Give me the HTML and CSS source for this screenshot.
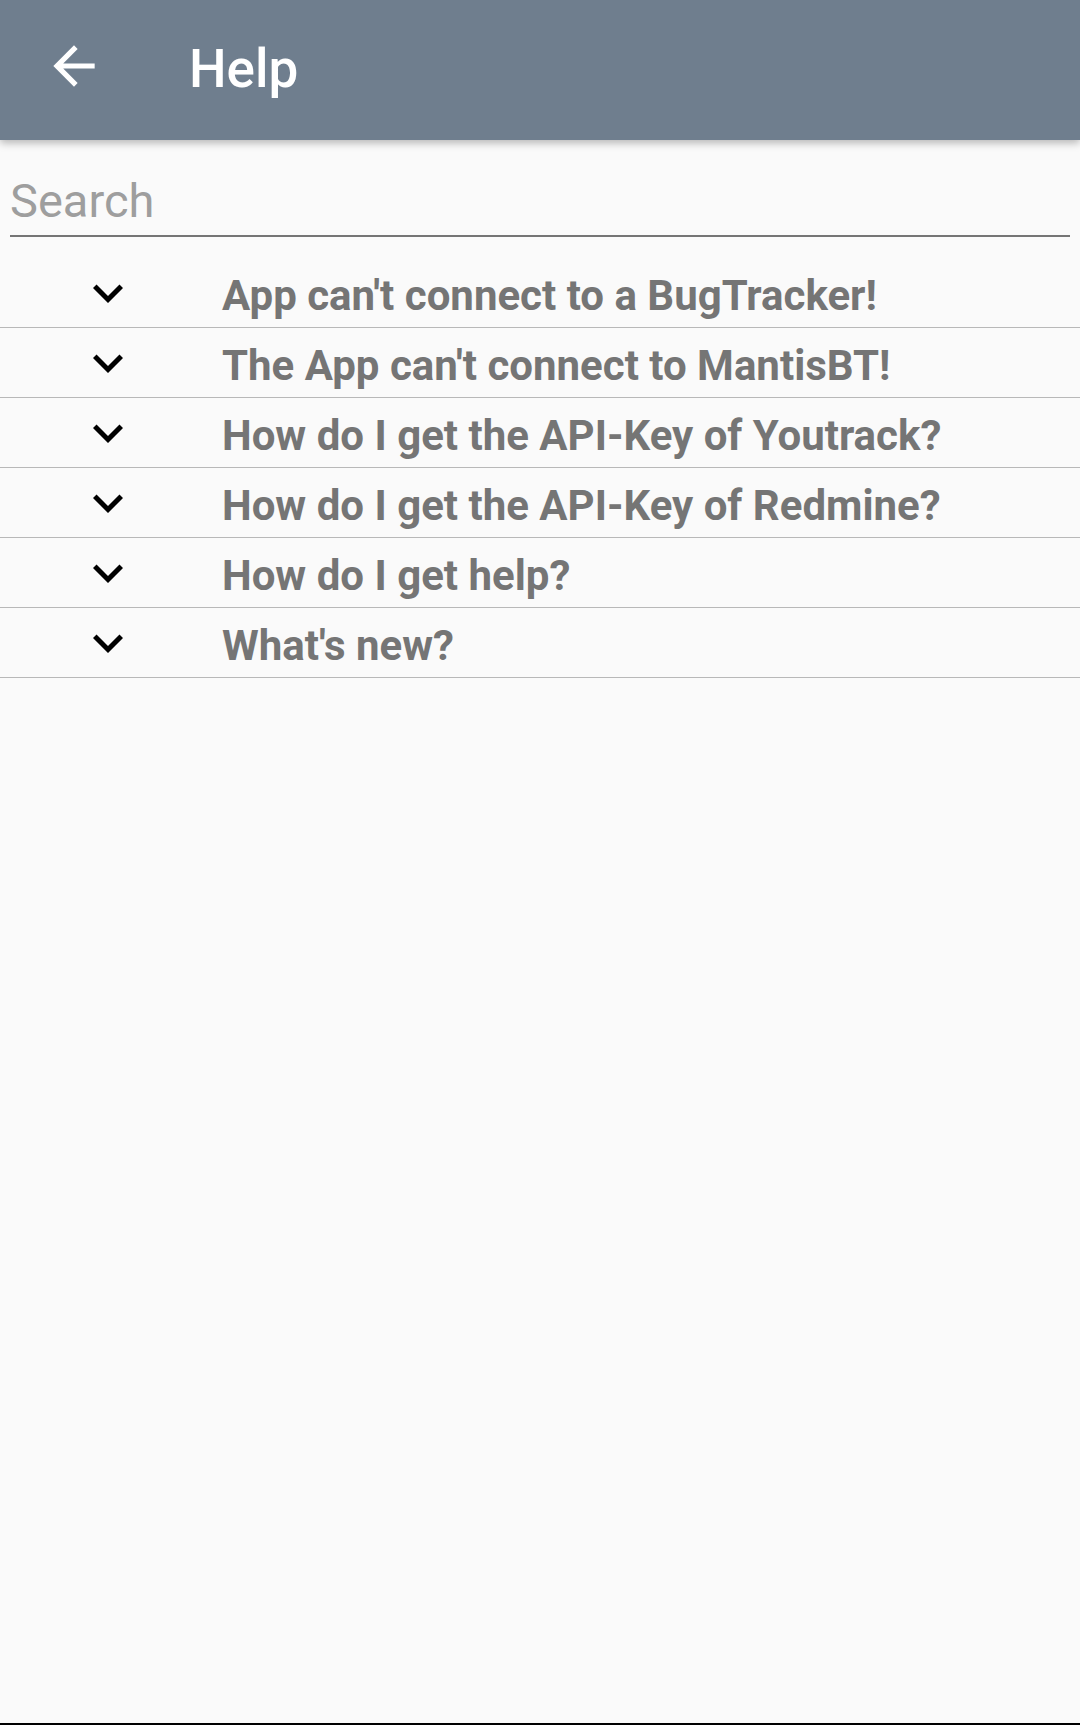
FILE: index.html
```html
<!DOCTYPE html>
<html>
<head>
<meta charset="utf-8">
<link rel="stylesheet" href="styles.css">
</head>
<body>
<div class="screen">
  <header class="appbar">
    <svg class="back" viewBox="0 0 24 24" width="62" height="62"><path fill="#fff" d="M20 11H7.83l5.59-5.59L12 4l-8 8 8 8 1.41-1.41L7.83 13H20v-2z"/></svg>
    <div class="title">Help</div>
  </header>
  <div class="search"><span class="placeholder">Search</span></div>
  <div class="list">
    <div class="row"><svg class="chev" viewBox="0 0 24 24" width="60" height="60"><path fill="#000" d="M16.59 8.59L12 13.17 7.41 8.59 6 10l6 6 6-6z"/></svg><span class="q">App can't connect to a BugTracker!</span></div>
    <div class="row"><svg class="chev" viewBox="0 0 24 24" width="60" height="60"><path fill="#000" d="M16.59 8.59L12 13.17 7.41 8.59 6 10l6 6 6-6z"/></svg><span class="q">The App can't connect to MantisBT!</span></div>
    <div class="row"><svg class="chev" viewBox="0 0 24 24" width="60" height="60"><path fill="#000" d="M16.59 8.59L12 13.17 7.41 8.59 6 10l6 6 6-6z"/></svg><span class="q">How do I get the API-Key of Youtrack?</span></div>
    <div class="row"><svg class="chev" viewBox="0 0 24 24" width="60" height="60"><path fill="#000" d="M16.59 8.59L12 13.17 7.41 8.59 6 10l6 6 6-6z"/></svg><span class="q">How do I get the API-Key of Redmine?</span></div>
    <div class="row"><svg class="chev" viewBox="0 0 24 24" width="60" height="60"><path fill="#000" d="M16.59 8.59L12 13.17 7.41 8.59 6 10l6 6 6-6z"/></svg><span class="q">How do I get help?</span></div>
    <div class="row"><svg class="chev" viewBox="0 0 24 24" width="60" height="60"><path fill="#000" d="M16.59 8.59L12 13.17 7.41 8.59 6 10l6 6 6-6z"/></svg><span class="q">What's new?</span></div>
  </div>
</div>
</body>
</html>
```
FILE: styles.css
```css
* { box-sizing: border-box; }
html, body { margin: 0; padding: 0; }
body { background: #fafafa; font-family: Roboto, "Noto Sans", sans-serif; }
.screen {
  width: 1080px;
  height: 1725px;
  border-bottom: 2px solid #000;
  display: flex;
  flex-direction: column;
  background: #fafafa;
}
.appbar {
  height: 140px;
  flex: none;
  background: #6f7e8e;
  display: flex;
  align-items: flex-start;
  padding-left: 43px;
  box-shadow: 0 3px 8px rgba(0,0,0,0.28);
  position: relative;
  z-index: 1;
}
.back { display: block; margin-top: 35px; }
.title {
  color: #fff;
  font-weight: 500;
  font-size: 53px;
  line-height: 62px;
  margin-top: 38px;
  margin-left: 84px;
}
.search {
  margin: 35px 10px 21px;
  border-bottom: 2px solid #757575;
  padding-bottom: 8px;
  flex: none;
}
.placeholder {
  display: block;
  font-size: 47px;
  line-height: 52px;
  color: #9e9e9e;
}
.row {
  height: 70px;
  border-bottom: 1px solid #b8b8b8;
  display: flex;
  align-items: flex-start;
}
.chev { display: block; margin-left: 78px; margin-top: 5px; flex: none; }
.q {
  margin-left: 84px;
  padding-top: 7px;
  font-size: 42px;
  line-height: 62px;
  font-weight: 700;
  color: #757575;
  white-space: nowrap;
}
```
